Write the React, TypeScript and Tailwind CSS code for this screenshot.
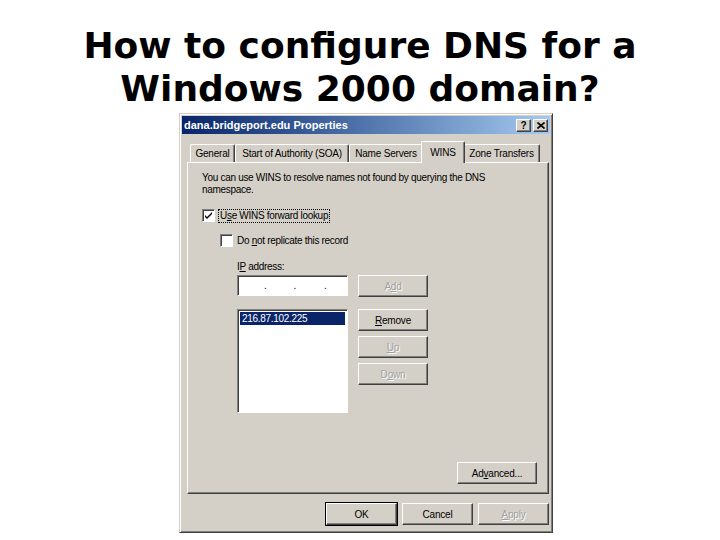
import type { ReactNode } from "react";

const ui = { fontFamily: '"Liberation Sans", Arial, sans-serif' };

// raised 3D edge used by buttons, tabs and title-bar boxes
const raised =
  "border border-t-white border-l-white border-r-[#404040] border-b-[#404040] shadow-[inset_-1px_-1px_0_#808080]";
const sunken =
  "border border-t-[#808080] border-l-[#808080] border-r-white border-b-white shadow-[inset_1px_1px_0_#404040]";

function Key({ children }: { children: ReactNode }) {
  return <span className="underline underline-offset-1">{children}</span>;
}

function Button({
  children,
  width,
  disabled,
  isDefault,
}: {
  children: ReactNode;
  width: string;
  disabled?: boolean;
  isDefault?: boolean;
}) {
  return (
    <div
      className={`${width} h-[22px] bg-[#d4d0c8] flex items-center justify-center text-[10px] tracking-[-0.2px] ${
        isDefault ? "outline outline-1 outline-black" : ""
      } ${raised} ${
        disabled ? "text-[#a0a0a0] [text-shadow:1px_1px_0_#fff]" : "text-black"
      }`}
    >
      {children}
    </div>
  );
}

function Checkbox({ checked }: { checked?: boolean }) {
  return (
    <div className={`w-[13px] h-[13px] bg-white flex items-center justify-center ${sunken}`}>
      {checked && (
        <svg width="9" height="9" viewBox="0 0 9 9">
          <path d="M1 4l2 2 5-5v2l-5 5-2-2z" fill="#000" />
        </svg>
      )}
    </div>
  );
}

function Tab({ label, active, width }: { label: string; active?: boolean; width: string }) {
  return (
    <div
      className={`${width} ${
        active ? "h-[22px] -mx-[2px] z-10 mb-[-1px] bg-[#d4d0c8]" : "h-[18px]"
      } flex items-center justify-center rounded-t-[2px] border-t border-l border-t-white border-l-white border-r border-r-[#404040] shadow-[inset_-1px_0_0_#808080] text-[10px] tracking-[-0.2px] text-black`}
    >
      {label}
    </div>
  );
}

export default function App() {
  return (
    <div className="w-[720px] h-[540px] bg-white flex flex-col overflow-hidden">
      <h1
        className="pt-[24px] text-center font-bold text-[36px] leading-[43px] text-black"
        style={{ fontFamily: '"DejaVu Sans", Verdana, sans-serif' }}
      >
        How to configure DNS for a
        <br />
        Windows 2000 domain?
      </h1>

      {/* Properties dialog */}
      <div
        className="ml-[179px] mt-[3px] w-[374px] h-[420px] bg-[#d4d0c8] p-[2px] flex flex-col border border-t-[#d4d0c8] border-l-[#d4d0c8] border-r-[#404040] border-b-[#404040] shadow-[inset_1px_1px_0_#fff,inset_-1px_-1px_0_#808080]"
        style={ui}
      >
        {/* Title bar */}
        <div className="h-[18px] bg-linear-to-r from-[#0a246a] to-[#a6caf0] flex items-center pl-[2px] pr-[2px]">
          <span className="text-white font-bold text-[11px]">dana.bridgeport.edu Properties</span>
          <div className="ml-auto flex gap-[2px]">
            <div className={`w-[15px] h-[13px] bg-[#d4d0c8] flex items-center justify-center text-[10px] font-bold ${raised}`}>
              ?
            </div>
            <div className={`w-[15px] h-[13px] bg-[#d4d0c8] flex items-center justify-center ${raised}`}>
              <svg width="8" height="7" viewBox="0 0 8 7">
                <path d="M0.5 0.5l7 6M7.5 0.5l-7 6" stroke="#000" strokeWidth="1.6" />
              </svg>
            </div>
          </div>
        </div>

        {/* Tabs */}
        <div className="mt-[6px] ml-[8px] flex items-end h-[22px] relative">
          <Tab label="General" width="w-[45px]" />
          <Tab label="Start of Authority (SOA)" width="w-[114px]" />
          <Tab label="Name Servers" width="w-[74px]" />
          <Tab label="WINS" width="w-[44px]" active />
          <Tab label="Zone Transfers" width="w-[77px]" />
        </div>

        {/* Tab panel */}
        <div className="ml-[5px] w-[362px] h-[332px] border border-t-white border-l-white border-r-[#404040] border-b-[#404040] shadow-[inset_-1px_-1px_0_#808080] flex flex-col pl-[14px] text-[10px] tracking-[-0.3px] text-black">
          <p className="mt-[9px] leading-[12px] w-[300px]">
            You can use WINS to resolve names not found by querying the DNS namespace.
          </p>

          <div className="mt-[13px] flex items-center gap-[4px]">
            <Checkbox checked />
            <span className="outline outline-1 outline-dotted outline-black px-[1px] leading-[12px]">
              U<Key>s</Key>e WINS forward lookup
            </span>
          </div>

          <div className="mt-[11px] ml-[18px] flex items-center gap-[4px]">
            <Checkbox />
            <span>
              Do <Key>n</Key>ot replicate this record
            </span>
          </div>

          <div className="ml-[35px] mt-[13px] flex flex-col">
            <span className="leading-[12px]">
              I<Key>P</Key> address:
            </span>

            <div className="mt-[2px] flex gap-[10px] items-start">
              <div className={`w-[111px] h-[21px] bg-white flex items-center ${sunken}`}>
                <span className="w-[26px]" />.
                <span className="w-[27px]" />.
                <span className="w-[28px]" />.
              </div>
              <Button width="w-[70px]" disabled>
                A<Key>d</Key>d
              </Button>
            </div>

            <div className="mt-[12px] flex gap-[10px] items-start">
              <div className={`w-[111px] h-[104px] bg-white p-[2px] ${sunken}`}>
                <div className="h-[13px] bg-[#0a246a] text-white flex items-center pl-[2px]">
                  216.87.102.225
                </div>
              </div>
              <div className="flex flex-col gap-[5px]">
                <Button width="w-[70px]">
                  <Key>R</Key>emove
                </Button>
                <Button width="w-[70px]" disabled>
                  <Key>U</Key>p
                </Button>
                <Button width="w-[70px]" disabled>
                  D<Key>o</Key>wn
                </Button>
              </div>
            </div>
          </div>

          <div className="mt-auto mb-[9px] ml-auto mr-[11px]">
            <Button width="w-[80px]">
              Ad<Key>v</Key>anced...
            </Button>
          </div>
        </div>

        {/* Dialog buttons */}
        <div className="mt-[9px] flex justify-end gap-[5px] pr-[1px]">
          <Button width="w-[71px]" isDefault>
            OK
          </Button>
          <Button width="w-[71px]">Cancel</Button>
          <Button width="w-[71px]" disabled>
            <Key>A</Key>pply
          </Button>
        </div>
      </div>
    </div>
  );
}
